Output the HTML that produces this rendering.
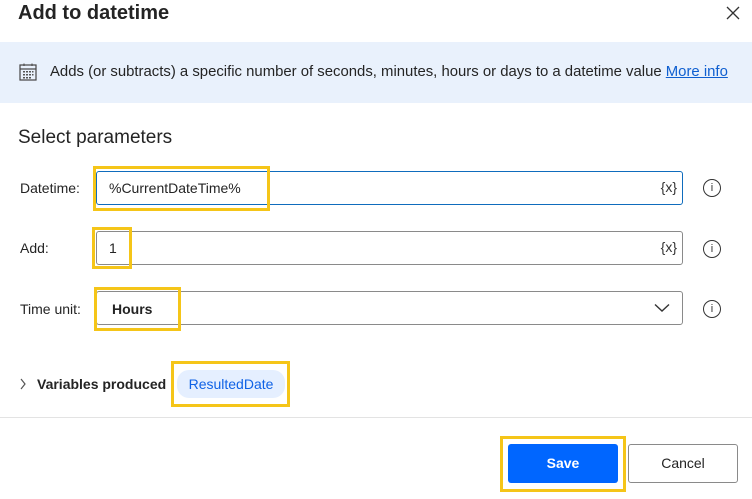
<!DOCTYPE html>
<html><head><meta charset="utf-8"><style>
*{box-sizing:border-box;margin:0;padding:0}
body{width:752px;height:499px;background:#fff;font-family:"Liberation Sans",sans-serif;color:#242424;position:relative;overflow:hidden}
.a{position:absolute}
.inp{position:absolute;left:96px;width:587px;height:34px;border:1px solid #8a8a8a;border-radius:3px;background:#fff}
.hl{position:absolute;border:3px solid #f5c518}
.lbl{position:absolute;left:20px;font-size:14px;color:#242424}
.fx{position:absolute;right:5px;top:7px;font-size:14px;color:#333}
.info{position:absolute;left:703px;width:18px;height:18px;border:1.2px solid #333;border-radius:50%;font-size:11px;text-align:center;line-height:16px;color:#333}
</style></head><body>
<div class="a" style="left:18px;top:2px;font-size:20px;font-weight:bold;color:#242424">Add to datetime</div>
<svg class="a" style="left:726px;top:6px" width="14" height="14" viewBox="0 0 14 14"><path d="M1 1L13 13M13 1L1 13" stroke="#333" stroke-width="1.3"/></svg>
<div class="a" style="left:0;top:42px;width:752px;height:61px;background:#e9f1fc"></div>
<svg class="a" style="left:19px;top:63px" width="18" height="18" viewBox="0 0 18 18"><rect x="1" y="2" width="16" height="15" fill="none" stroke="#444" stroke-width="1.2"/><line x1="1" y1="6" x2="17" y2="6" stroke="#444" stroke-width="1.2"/><line x1="5" y1="0.5" x2="5" y2="3" stroke="#444"/><line x1="13" y1="0.5" x2="13" y2="3" stroke="#444"/><g fill="#555"><rect x="4" y="8" width="2" height="1.5"/><rect x="7" y="8" width="2" height="1.5"/><rect x="10" y="8" width="2" height="1.5"/><rect x="13" y="8" width="1.5" height="1.5"/><rect x="4" y="11" width="2" height="1.5"/><rect x="7" y="11" width="2" height="1.5"/><rect x="10" y="11" width="2" height="1.5"/><rect x="13" y="11" width="1.5" height="1.5"/><rect x="4" y="14" width="2" height="1.5"/><rect x="7" y="14" width="2" height="1.5"/><rect x="10" y="14" width="2" height="1.5"/></g></svg>
<div class="a" style="left:50px;top:64px;font-size:14.9px;color:#242424;white-space:nowrap">Adds (or subtracts) a specific number of seconds, minutes, hours or days to a datetime value <span style="color:#0f5fd0;text-decoration:underline">More info</span></div>
<div class="a" style="left:18px;top:127px;font-size:19px;color:#242424">Select parameters</div>

<div class="lbl" style="top:180px">Datetime:</div>
<div class="inp" style="top:171px;border-color:#0f6cbd"><div class="a" style="left:12px;top:8px;font-size:14px">%CurrentDateTime%</div><div class="fx">{x}</div></div>
<div class="hl" style="left:93px;top:166px;width:177px;height:45px"></div>
<div class="info" style="top:179px">i</div>

<div class="lbl" style="top:240px">Add:</div>
<div class="inp" style="top:231px"><div class="a" style="left:12px;top:8px;font-size:14px">1</div><div class="fx">{x}</div></div>
<div class="hl" style="left:92px;top:227px;width:40px;height:42px"></div>
<div class="info" style="top:240px">i</div>

<div class="lbl" style="top:301px">Time unit:</div>
<div class="inp" style="top:291px"><div class="a" style="left:15px;top:9px;font-size:14px;font-weight:bold">Hours</div>
<svg class="a" style="left:557px;top:11px" width="16" height="10" viewBox="0 0 16 10"><path d="M1 1.5L8 8L15 1.5" fill="none" stroke="#333" stroke-width="1.4"/></svg></div>
<div class="hl" style="left:94px;top:287px;width:87px;height:44px"></div>
<div class="info" style="top:300px">i</div>

<svg class="a" style="left:19px;top:378px" width="8" height="12" viewBox="0 0 8 12"><path d="M2 1L6 6L2 11" fill="none" stroke="#555" stroke-width="1.2"/></svg>
<div class="a" style="left:37px;top:376px;font-size:14px;font-weight:bold">Variables produced</div>
<div class="a" style="left:177px;top:370px;width:108px;height:28px;background:#e5efff;border-radius:12px;color:#0f62e6;font-size:14px;text-align:center;line-height:28px">ResultedDate</div>
<div class="hl" style="left:171px;top:361px;width:119px;height:46px"></div>

<div class="a" style="left:0;top:417px;width:752px;height:1px;background:#e3e3e3"></div>
<div class="a" style="left:508px;top:444px;width:110px;height:39px;background:#0066ff;border-radius:3px;color:#fff;font-weight:bold;font-size:14px;text-align:center;line-height:39px">Save</div>
<div class="hl" style="left:500px;top:436px;width:126px;height:56px"></div>
<div class="a" style="left:628px;top:444px;width:110px;height:39px;border:1px solid #8a8a8a;border-radius:3px;font-size:14px;text-align:center;line-height:37px">Cancel</div>
</body></html>
